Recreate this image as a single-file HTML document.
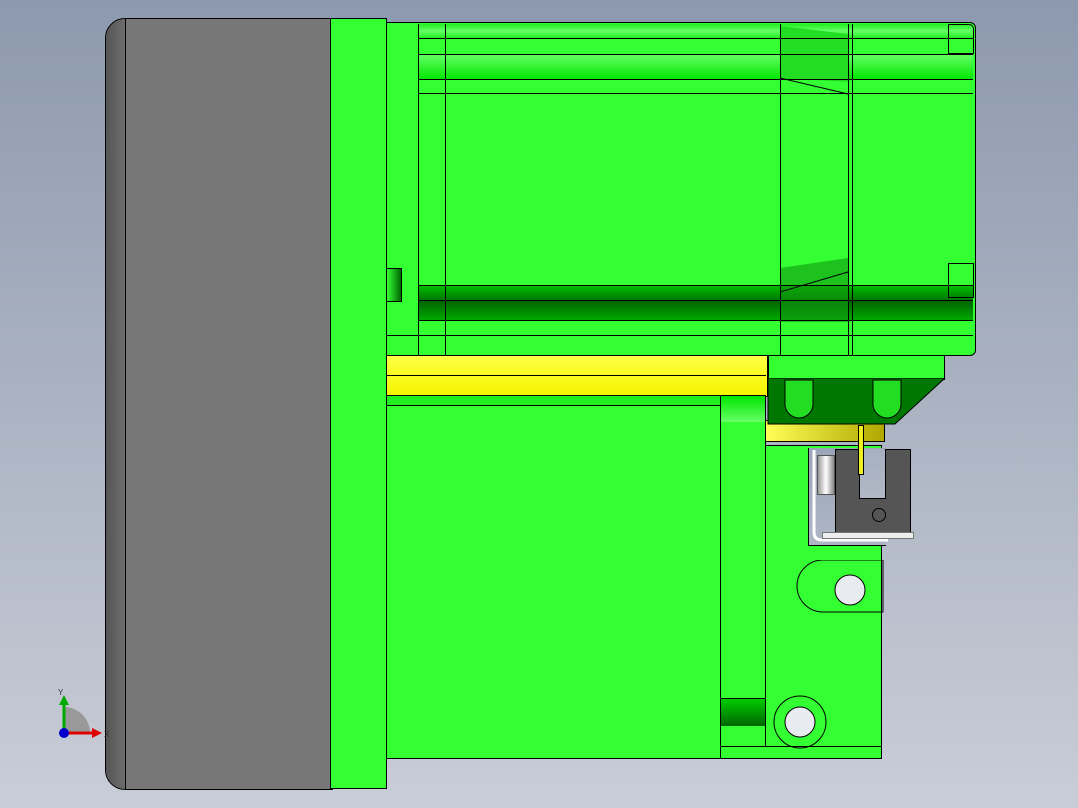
<!DOCTYPE html>
<html><head><style>
body{margin:0;width:1078px;height:808px;overflow:hidden;background:linear-gradient(#8d99ae,#c9cdd7);position:relative;font-family:"Liberation Sans",sans-serif}
div{position:absolute;box-sizing:border-box}
.g{background:#33ff33;border:1px solid #000}
.l{background:#000}
</style></head><body>
<div style="left:105px;top:18px;width:228px;height:772px;background:#777;border:1px solid #000;border-radius:20px 0 0 20px"></div>
<div style="left:106px;top:19px;width:20px;height:770px;background:linear-gradient(90deg,#555,#6d6d6d);border-radius:19px 0 0 19px;border-right:1px solid #000"></div>
<div class="g" style="left:330px;top:18px;width:57px;height:771px"></div>
<div class="g" style="left:386px;top:22px;width:590px;height:334px;border-radius:0 6px 6px 0"></div>
<div style="left:418px;top:24px;width:555px;height:14px;background:linear-gradient(#22ee22,#66ff66,#22ee22)"></div>
<div style="left:418px;top:54px;width:555px;height:26px;background:linear-gradient(#66ff66,#00e600)"></div>
<div style="left:418px;top:286px;width:555px;height:14px;background:linear-gradient(#00bb00,#007700)"></div>
<div style="left:418px;top:300px;width:555px;height:20px;background:linear-gradient(#006000,#00aa00)"></div>
<div style="left:418px;top:320px;width:555px;height:15px;background:#33ff33"></div>
<svg style="position:absolute;left:780px;top:22px" width="72" height="334"><path d="M0,4 L68,12 L70,60 L0,56z" fill="#22dd22"/><path d="M0,246 L68,236 L70,300 L0,300z" fill="#119911" opacity=".6"/><path d="M0,56 L68,72 M0,270 L68,250" stroke="#000" fill="none"/></svg>
<div class="l" style="left:418px;top:38px;width:555px;height:1px"></div>
<div class="l" style="left:418px;top:54px;width:555px;height:1px"></div>
<div class="l" style="left:418px;top:79px;width:555px;height:1px"></div>
<div class="l" style="left:418px;top:93px;width:555px;height:1px"></div>
<div class="l" style="left:418px;top:285px;width:555px;height:1px"></div>
<div class="l" style="left:418px;top:300px;width:555px;height:1px"></div>
<div class="l" style="left:418px;top:320px;width:555px;height:1px"></div>
<div class="l" style="left:386px;top:335px;width:587px;height:1px"></div>
<div class="l" style="left:418px;top:24px;width:1px;height:332px"></div>
<div class="l" style="left:445px;top:24px;width:1px;height:332px"></div>
<div class="l" style="left:780px;top:24px;width:1px;height:332px"></div>
<div class="l" style="left:848px;top:24px;width:1px;height:332px"></div>
<div class="l" style="left:852px;top:24px;width:1px;height:332px"></div>
<div style="left:386px;top:268px;width:16px;height:34px;background:linear-gradient(90deg,#33ff33,#006600);border:1px solid #000"></div>
<div style="left:948px;top:24px;width:26px;height:30px;border:1px solid #000;border-radius:0 5px 0 0"></div>
<div style="left:948px;top:263px;width:26px;height:35px;border:1px solid #000"></div>
<div style="left:386px;top:355px;width:382px;height:42px;background:linear-gradient(#ffff44,#f5f500);border:1px solid #000"></div>
<div class="l" style="left:386px;top:375px;width:380px;height:1px"></div>
<div style="left:765px;top:420px;width:120px;height:22px;background:linear-gradient(90deg,#ffff55,#b0a800);border:1px solid #000"></div>
<div style="left:768px;top:355px;width:177px;height:25px;background:#33ff33;border:1px solid #000"></div>
<svg style="position:absolute;left:765px;top:378px" width="182" height="50"><polygon points="3,0 180,0 130,46 3,46" fill="#007700" stroke="#000"/><path d="M20,2 v24 a14,14 0 0 0 28,0 v-24z" fill="#22dd22" stroke="#000"/><path d="M108,2 v24 a14,14 0 0 0 28,0 v-24z" fill="#22dd22" stroke="#000"/></svg>
<div class="g" style="left:386px;top:395px;width:336px;height:364px"></div>
<div style="left:387px;top:396px;width:334px;height:10px;background:#22ee22;border-bottom:1px solid #000"></div>
<div class="g" style="left:720px;top:395px;width:46px;height:354px"></div>
<div style="left:721px;top:396px;width:44px;height:26px;background:linear-gradient(#00e600,#66ff66)"></div>
<div style="left:721px;top:698px;width:44px;height:28px;background:linear-gradient(#00cc00,#006600);border-top:1px solid #000"></div>
<div style="left:766px;top:445px;width:116px;height:304px;background:#33ff33;border:1px solid #000;border-left:none"></div>
<div style="left:808px;top:448px;width:78px;height:98px;background:linear-gradient(#9aa5b8,#aeb6c5);border-left:1px solid #000;border-bottom:1px solid #000"></div>
<svg style="position:absolute;left:808px;top:448px" width="80" height="100"><path d="M6,2 V84 Q6,92 14,92 H80" stroke="#fff" stroke-width="3" fill="none"/></svg>
<div style="left:720px;top:746px;width:162px;height:13px;background:#33ff33;border:1px solid #000"></div>
<svg style="position:absolute;left:760px;top:560px" width="130" height="200"><path d="M63,0 h60 v52 h-60 a26,26 0 0 1 0,-52z" fill="none" stroke="#000"/><circle cx="90" cy="30" r="15" fill="#e8ebef" stroke="#000"/><circle cx="40" cy="162" r="26" fill="none" stroke="#000"/><circle cx="40" cy="162" r="15" fill="#e8ebef" stroke="#000"/></svg>
<div style="left:817px;top:455px;width:18px;height:40px;background:linear-gradient(90deg,#999,#fff,#888);border:1px solid #555"></div>
<div style="left:835px;top:449px;width:76px;height:85px;background:#555;border:1px solid #000"></div>
<div style="left:859px;top:449px;width:27px;height:50px;background:linear-gradient(#a7b0c0,#b0b8c6);border:1px solid #000;border-top:none"></div>
<div style="left:858px;top:425px;width:6px;height:50px;background:#eeee22;border:1px solid #000"></div>
<div style="left:822px;top:532px;width:92px;height:7px;background:#eee;border:1px solid #777"></div>
<div style="left:872px;top:508px;width:14px;height:14px;border:1px solid #000;border-radius:50%"></div>
<svg style="position:absolute;left:48px;top:685px" width="70" height="70"><path d="M16,48 L16,22 A26,26 0 0 1 42,48 z" fill="#999"/><line x1="16" y1="48" x2="16" y2="18" stroke="#0a0" stroke-width="3"/><polygon points="11,20 16,10 21,20" fill="#0a0"/><line x1="16" y1="48" x2="46" y2="48" stroke="#d00" stroke-width="3"/><polygon points="44,43 54,48 44,53" fill="#d00"/><circle cx="16" cy="48" r="5" fill="#00c"/><text x="10" y="10" font-size="8" fill="#333">Y</text><text x="56" y="52" font-size="8" fill="#333">X</text></svg>
</body></html>
